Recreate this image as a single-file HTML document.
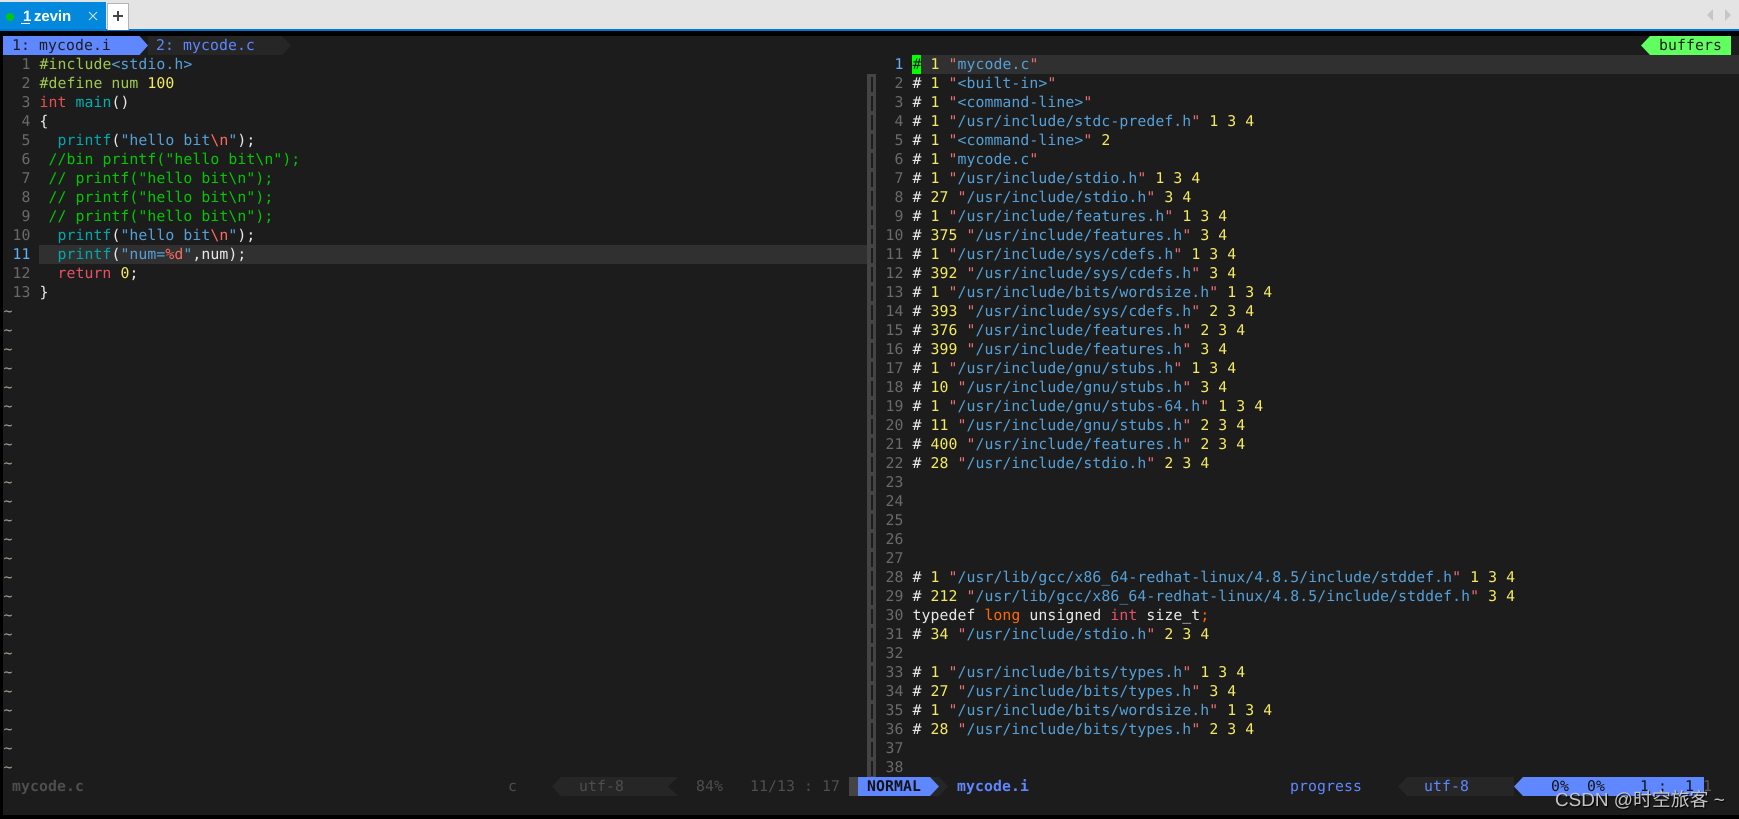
<!DOCTYPE html>
<html><head><meta charset="utf-8">
<style>
html,body{margin:0;padding:0;background:#000;}
body{position:relative;width:1739px;height:819px;overflow:hidden;font-family:"DejaVu Sans Mono","Liberation Mono",monospace;font-size:14.8px;letter-spacing:.085px;text-rendering:geometricPrecision;}
.abs{position:absolute;}
pre{position:absolute;margin:0;font:inherit;line-height:19px;color:#e8e8e8;white-space:pre;}
u{text-decoration:none;color:#6a6a6a;}
u.c{color:#5fafff;}
em{font-style:normal;color:#e8707a;}
s{text-decoration:none;color:#55a0d8;}
i{font-style:normal;color:#f4ea5f;}
.p{color:#a0c84f;}
.f{color:#00a8ac;}
.k{color:#e8506a;}
.e{color:#ff6a5f;}
.g{color:#00c800;}
.o{color:#ff6a00;}
.st{position:absolute;top:777px;height:19px;line-height:19px;white-space:pre;}
</style></head>
<body>
<!-- window tab bar -->
<div class="abs" style="left:0;top:0;width:1739px;height:29px;background:#e4e4e4"></div>
<div class="abs" style="left:0;top:29px;width:1739px;height:2px;background:#0078d7"></div>
<div class="abs" style="left:0;top:2px;width:106px;height:27px;background:#0288dc"></div>
<div class="abs" style="left:6px;top:13px;width:8px;height:8px;border-radius:50%;background:#00c814"></div>
<div class="abs" style="left:23px;top:7px;font:bold 15px/20px 'Liberation Sans',sans-serif;letter-spacing:0;color:#fff">1</div>
<div class="abs" style="left:21px;top:23px;width:9px;height:1px;background:#fff"></div>
<div class="abs" style="left:34px;top:7px;font:bold 15px/20px 'Liberation Sans',sans-serif;color:#fff;letter-spacing:-.1px">zevin</div>
<svg class="abs" style="left:88px;top:11px" width="10" height="10"><path d="M1 1L9 9M9 1L1 9" stroke="#cfe6f7" stroke-width="1" fill="none"/></svg>
<div class="abs" style="left:107px;top:3px;width:20px;height:26px;background:#fff;border:1px solid #b4b4b4;border-bottom:0"></div>
<svg class="abs" style="left:112px;top:10px" width="12" height="12"><path d="M6 1V11M1 6H11" stroke="#444" stroke-width="2" fill="none"/></svg>
<svg class="abs" style="left:1706px;top:9px" width="27" height="13"><path d="M7 0V12L1 6Z" fill="#c6c6c6"/><path d="M19 0V12L25 6Z" fill="#c6c6c6"/></svg>

<!-- terminal -->
<div class="abs" style="left:3px;top:36px;width:1736px;height:779px;background:#1c1c1c"></div>

<!-- vim tabline -->
<div class="abs" style="left:3px;top:36px;width:136px;height:19px;background:#5f87ff"></div>
<svg class="abs" style="left:139px;top:36px" width="9" height="19"><path d="M0 0H0.5L9 9.5L0.5 19H0Z" fill="#5f87ff"/></svg>
<div class="abs" style="left:148px;top:36px;width:134px;height:19px;background:#262626"></div>
<svg class="abs" style="left:282px;top:36px" width="9" height="19"><path d="M0 0L9 9.5L0 19Z" fill="#262626"/></svg>
<pre style="left:12px;top:36px;color:#1c1c1c">1: mycode.i</pre>
<pre style="left:156px;top:36px;color:#5f87ff">2: mycode.c</pre>
<div class="abs" style="left:1650px;top:36px;width:81px;height:19px;background:#5fff5f"></div>
<svg class="abs" style="left:1641px;top:36px" width="9" height="19"><path d="M9 0L0 9.5L9 19Z" fill="#5fff5f"/></svg>
<pre style="left:1659px;top:36px;color:#1c1c1c">buffers</pre>

<!-- cursor lines -->
<div class="abs" style="left:39px;top:245px;width:828px;height:19px;background:#303030"></div>
<div class="abs" style="left:921px;top:55px;width:818px;height:19px;background:#303030"></div>
<div class="abs" style="left:912px;top:55px;width:9px;height:19px;background:#00ff00"></div>

<!-- separator -->
<div class="abs" style="left:867px;top:74px;width:9px;height:703px;background:#444"></div>
<div class="abs" style="left:871px;top:74px;width:2px;height:703px;background:repeating-linear-gradient(to bottom,#444 0,#444 3px,#1c1c1c 3px,#1c1c1c 18px,#444 18px,#444 19px)"></div>

<!-- left pane -->
<pre style="left:3.5px;top:55px"><u>  1</u> <span class="p">#include</span><s>&lt;stdio.h&gt;</s>
<u>  2</u> <span class="p">#define num</span> <i>100</i>
<u>  3</u> <span style="color:#e85050">int</span> <span style="color:#00afaf">main</span>()
<u>  4</u> {
<u>  5</u>   <span class="f">printf</span>(<s>"hello bit</s><span class="e">\n</span><s>"</s>);
<u>  6</u>  <span class="g">//bin printf("hello bit\n");</span>
<u>  7</u>  <span class="g">// printf("hello bit\n");</span>
<u>  8</u>  <span class="g">// printf("hello bit\n");</span>
<u>  9</u>  <span class="g">// printf("hello bit\n");</span>
<u> 10</u>   <span class="f">printf</span>(<s>"hello bit</s><span class="e">\n</span><s>"</s>);
<u class="c"> 11</u>   <span class="f">printf</span>(<s>"num=</s><span class="e">%d</span><s>"</s>,num);
<u> 12</u>   <span class="k">return</span> <i>0</i>;
<u> 13</u> }
<span style="color:#a0a090">~
~
~
~
~
~
~
~
~
~
~
~
~
~
~
~
~
~
~
~
~
~
~
~
~</span></pre>

<!-- right pane -->
<pre style="left:876.5px;top:55px"><u class="c">  1</u> <span style="color:#1c1c1c">#</span> <i>1</i> <em>"</em><s>mycode.c</s><em>"</em>
<u>  2</u> # <i>1</i> <em>"</em><s>&lt;built-in&gt;</s><em>"</em>
<u>  3</u> # <i>1</i> <em>"</em><s>&lt;command-line&gt;</s><em>"</em>
<u>  4</u> # <i>1</i> <em>"</em><s>/usr/include/stdc-predef.h</s><em>"</em> <i>1 3 4</i>
<u>  5</u> # <i>1</i> <em>"</em><s>&lt;command-line&gt;</s><em>"</em> <i>2</i>
<u>  6</u> # <i>1</i> <em>"</em><s>mycode.c</s><em>"</em>
<u>  7</u> # <i>1</i> <em>"</em><s>/usr/include/stdio.h</s><em>"</em> <i>1 3 4</i>
<u>  8</u> # <i>27</i> <em>"</em><s>/usr/include/stdio.h</s><em>"</em> <i>3 4</i>
<u>  9</u> # <i>1</i> <em>"</em><s>/usr/include/features.h</s><em>"</em> <i>1 3 4</i>
<u> 10</u> # <i>375</i> <em>"</em><s>/usr/include/features.h</s><em>"</em> <i>3 4</i>
<u> 11</u> # <i>1</i> <em>"</em><s>/usr/include/sys/cdefs.h</s><em>"</em> <i>1 3 4</i>
<u> 12</u> # <i>392</i> <em>"</em><s>/usr/include/sys/cdefs.h</s><em>"</em> <i>3 4</i>
<u> 13</u> # <i>1</i> <em>"</em><s>/usr/include/bits/wordsize.h</s><em>"</em> <i>1 3 4</i>
<u> 14</u> # <i>393</i> <em>"</em><s>/usr/include/sys/cdefs.h</s><em>"</em> <i>2 3 4</i>
<u> 15</u> # <i>376</i> <em>"</em><s>/usr/include/features.h</s><em>"</em> <i>2 3 4</i>
<u> 16</u> # <i>399</i> <em>"</em><s>/usr/include/features.h</s><em>"</em> <i>3 4</i>
<u> 17</u> # <i>1</i> <em>"</em><s>/usr/include/gnu/stubs.h</s><em>"</em> <i>1 3 4</i>
<u> 18</u> # <i>10</i> <em>"</em><s>/usr/include/gnu/stubs.h</s><em>"</em> <i>3 4</i>
<u> 19</u> # <i>1</i> <em>"</em><s>/usr/include/gnu/stubs-64.h</s><em>"</em> <i>1 3 4</i>
<u> 20</u> # <i>11</i> <em>"</em><s>/usr/include/gnu/stubs.h</s><em>"</em> <i>2 3 4</i>
<u> 21</u> # <i>400</i> <em>"</em><s>/usr/include/features.h</s><em>"</em> <i>2 3 4</i>
<u> 22</u> # <i>28</i> <em>"</em><s>/usr/include/stdio.h</s><em>"</em> <i>2 3 4</i>
<u> 23</u>
<u> 24</u>
<u> 25</u>
<u> 26</u>
<u> 27</u>
<u> 28</u> # <i>1</i> <em>"</em><s>/usr/lib/gcc/x86_64-redhat-linux/4.8.5/include/stddef.h</s><em>"</em> <i>1 3 4</i>
<u> 29</u> # <i>212</i> <em>"</em><s>/usr/lib/gcc/x86_64-redhat-linux/4.8.5/include/stddef.h</s><em>"</em> <i>3 4</i>
<u> 30</u> typedef <span class="o">long</span> unsigned <span class="k">int</span> size_t<span class="o">;</span>
<u> 31</u> # <i>34</i> <em>"</em><s>/usr/include/stdio.h</s><em>"</em> <i>2 3 4</i>
<u> 32</u>
<u> 33</u> # <i>1</i> <em>"</em><s>/usr/include/bits/types.h</s><em>"</em> <i>1 3 4</i>
<u> 34</u> # <i>27</i> <em>"</em><s>/usr/include/bits/types.h</s><em>"</em> <i>3 4</i>
<u> 35</u> # <i>1</i> <em>"</em><s>/usr/include/bits/wordsize.h</s><em>"</em> <i>1 3 4</i>
<u> 36</u> # <i>28</i> <em>"</em><s>/usr/include/bits/types.h</s><em>"</em> <i>2 3 4</i>
<u> 37</u>
<u> 38</u></pre>

<!-- status line: inactive -->
<div class="st" style="left:12px;color:#4e4e4e;font-weight:bold">mycode.c</div>
<div class="st" style="left:508px;color:#4e4e4e">c</div>
<div class="abs" style="left:561px;top:777px;width:107px;height:19px;background:#262626"></div>
<svg class="abs" style="left:552px;top:777px" width="9" height="19"><path d="M9 0L0 9.5L9 19Z" fill="#262626"/></svg>
<svg class="abs" style="left:668px;top:777px" width="11" height="19"><path d="M0 0H10L0 9.5L10 19H0Z" fill="#262626"/></svg>
<div class="st" style="left:579px;color:#4e4e4e">utf-8</div>
<div class="st" style="left:696px;color:#4e4e4e">84%</div>
<div class="st" style="left:750px;color:#4e4e4e">11/13 : 17</div>

<!-- status line: active -->
<div class="abs" style="left:849px;top:777px;width:9px;height:19px;background:#444"></div>
<div class="abs" style="left:858px;top:777px;width:72px;height:19px;background:#5f87ff"></div>
<svg class="abs" style="left:930px;top:777px" width="18" height="19"><path d="M0 0H9L18 9.5L9 19H0Z" fill="#262626"/><path d="M0 0L9 9.5L0 19Z" fill="#5f87ff"/></svg>
<div class="st" style="left:867px;color:#121212;font-weight:bold">NORMAL</div>
<div class="st" style="left:957px;color:#5f87ff;font-weight:bold">mycode.i</div>
<div class="st" style="left:1290px;color:#5f87ff">progress</div>
<div class="abs" style="left:1407px;top:777px;width:107px;height:19px;background:#262626"></div>
<svg class="abs" style="left:1398px;top:777px" width="9" height="19"><path d="M9 0L0 9.5L9 19Z" fill="#262626"/></svg>
<div class="st" style="left:1424px;color:#5f87ff">utf-8</div>
<div class="abs" style="left:1523px;top:777px;width:181px;height:19px;background:#5f87ff"></div>
<svg class="abs" style="left:1514px;top:777px" width="9" height="19"><path d="M9 0L0 9.5L9 19Z" fill="#5f87ff"/></svg>
<div class="st" style="left:1551px;color:#121212">0%  0%</div>
<div class="st" style="left:1640px;color:#121212">1 :  1</div>
<div class="st" style="left:1703px;color:#5a5a5a">1</div>

<!-- watermark -->
<div class="abs" style="left:1555px;top:789px;font:18.9px/24px 'Liberation Sans','Noto Sans CJK SC',sans-serif;letter-spacing:0;color:#c4c4c4;text-shadow:1px 1px 1px #000;white-space:pre">CSDN @时空旅客 ~</div>
</body></html>
